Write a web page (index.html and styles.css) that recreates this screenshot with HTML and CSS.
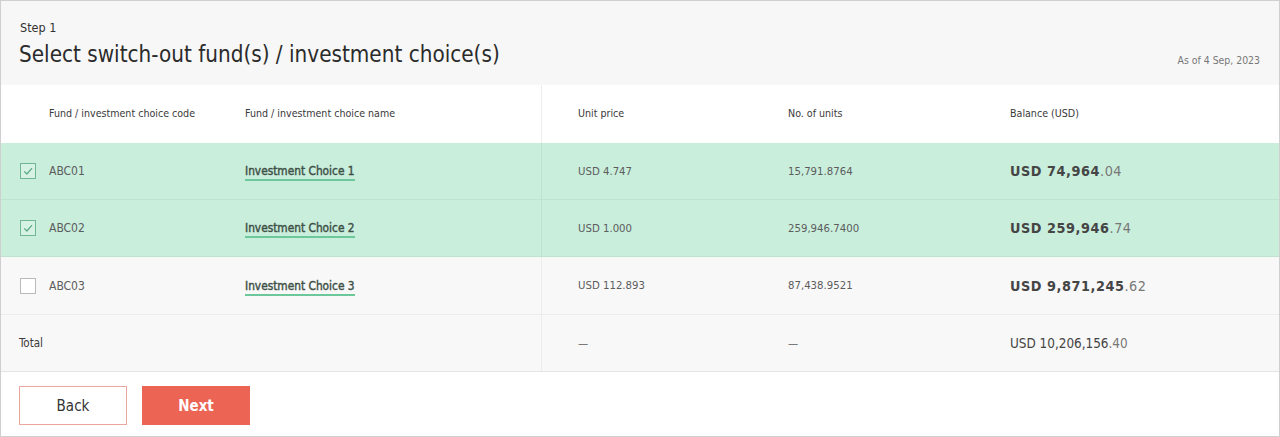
FILE: index.html
```html
<!DOCTYPE html>
<html lang="en">
<head>
<meta charset="utf-8">
<title>Select switch-out funds</title>
<link rel="stylesheet" href="styles.css">
</head>
<body>
<div class="page">
  <header class="head">
    <div class="head-left">
      <div class="step">Step 1</div>
      <h1 class="title">Select switch-out fund(s) / investment choice(s)</h1>
    </div>
    <div class="asof">As of 4 Sep, 2023</div>
  </header>

  <div class="table">
    <div class="row row-head">
      <div class="cell c-check"></div>
      <div class="cell c-code">Fund / investment choice code</div>
      <div class="cell c-name">Fund / investment choice name</div>
      <div class="cell c-price">Unit price</div>
      <div class="cell c-units">No. of units</div>
      <div class="cell c-bal">Balance (USD)</div>
    </div>

    <div class="row row-sel">
      <div class="cell c-check"><span class="box checked"><svg viewBox="0 0 16 16" width="16" height="16"><path d="M4.2 8.3 L6.9 11 L12 5.2" fill="none" stroke="#5aa883" stroke-width="1.2"/></svg></span></div>
      <div class="cell c-code">ABC01</div>
      <div class="cell c-name"><a class="link">Investment Choice 1</a></div>
      <div class="cell c-price">USD 4.747</div>
      <div class="cell c-units">15,791.8764</div>
      <div class="cell c-bal"><span class="amt">USD 74,964</span><span class="dec">.04</span></div>
    </div>

    <div class="row row-sel">
      <div class="cell c-check"><span class="box checked"><svg viewBox="0 0 16 16" width="16" height="16"><path d="M4.2 8.3 L6.9 11 L12 5.2" fill="none" stroke="#5aa883" stroke-width="1.2"/></svg></span></div>
      <div class="cell c-code">ABC02</div>
      <div class="cell c-name"><a class="link">Investment Choice 2</a></div>
      <div class="cell c-price">USD 1.000</div>
      <div class="cell c-units">259,946.7400</div>
      <div class="cell c-bal"><span class="amt">USD 259,946</span><span class="dec">.74</span></div>
    </div>

    <div class="row row-plain">
      <div class="cell c-check"><span class="box"></span></div>
      <div class="cell c-code">ABC03</div>
      <div class="cell c-name"><a class="link">Investment Choice 3</a></div>
      <div class="cell c-price">USD 112.893</div>
      <div class="cell c-units">87,438.9521</div>
      <div class="cell c-bal"><span class="amt">USD 9,871,245</span><span class="dec">.62</span></div>
    </div>

    <div class="row row-total">
      <div class="cell c-total">Total</div>
      <div class="cell c-price">—</div>
      <div class="cell c-units">—</div>
      <div class="cell c-bal c-bal-total"><span class="amt-t">USD 10,206,156</span><span class="dec">.40</span></div>
    </div>
  </div>

  <footer class="foot">
    <button class="btn btn-back">Back</button>
    <button class="btn btn-next">Next</button>
  </footer>
</div>
</body>
</html>
```

FILE: styles.css
```css
* { box-sizing: border-box; }
html, body { margin: 0; padding: 0; background: #fff; }
body {
  font-family: "DejaVu Sans Condensed", "Roboto", sans-serif;
  color: #333;
}
.page {
  width: 1280px;
  height: 437px;
  border: 1px solid #cfcfcf;
  display: flex;
  flex-direction: column;
  overflow: hidden;
}
.head {
  height: 84px;
  background: #f7f7f7;
  display: flex;
  justify-content: space-between;
  align-items: flex-end;
  padding: 0 19px 17px 18px;
}
.step {
  font-size: 12.5px;
  color: #333;
  margin-bottom: 5px;
  padding-left: 1px;
}
.title {
  margin: 0;
  font-size: 22.3px;
  font-weight: normal;
  color: #2b2b2b;
  line-height: 28px;
}
.asof {
  font-size: 10.4px;
  color: #777;
  padding-bottom: 2px;
}
.table { display: flex; flex-direction: column; }
.row {
  display: grid;
  grid-template-columns: 48px 196px 296px 247px 222px 1fr;
  align-items: stretch;
  border-bottom: 1px solid #ececec;
}
.row-head { height: 58px; background: #fff; border-bottom: none; }
.row-head .cell { padding-bottom: 2px; }
.row-sel { height: 57px; background: #c9eedc; border-bottom-color: #bfe3d1; }
.row-plain { height: 58px; background: #f8f8f8; }
.row-total {
  height: 57px;
  background: #f8f8f8;
  grid-template-columns: 540px 247px 222px 1fr;
  border-bottom: 1px solid #e4e4e4;
}
.cell {
  display: flex;
  align-items: center;
  font-size: 12px;
  color: #5c5c5c;
}
.row-head .cell { color: #3a3a3a; font-size: 10.6px; letter-spacing: 0; }
.c-check { padding-left: 19px; }
.c-price, .c-units { font-size: 11.3px; }
.c-price { padding-left: 36px; border-left: 1px solid #ececec; }
.row-sel .c-price { border-left-color: #bde2cf; }
.c-total { padding-left: 18px; color: #3a3a3a; font-size: 11.5px; }
.box {
  width: 16px;
  height: 16px;
  border: 1px solid #b9b9b9;
  background: #fff;
  display: inline-block;
  position: relative;
}
.box.checked {
  border-color: #6fb792;
  background: #d6f2e4;
}
.box svg { position: absolute; left: -1px; top: -1px; }
.link {
  font-weight: normal;
  -webkit-text-stroke: 0.4px #3e5046;
  color: #3e5046;
  text-decoration: none;
  border-bottom: 2px solid #6cc79a;
  padding-bottom: 1px;
  font-size: 11.8px;
  margin-top: 3px;
}
.c-bal { font-size: 14.3px; letter-spacing: 0.55px; }
.c-bal-total { font-size: 13.4px; letter-spacing: 0; }
.amt { font-weight: bold; color: #454545; }
.amt-t { color: #444; }
.dec { color: #777; font-weight: normal; }
.foot {
  flex: 1;
  display: flex;
  align-items: flex-start;
  gap: 15px;
  padding: 14px 0 0 18px;
  background: #fff;
}
.btn {
  width: 108px;
  height: 39px;
  font-family: inherit;
  font-size: 15px;
  border-radius: 0;
  cursor: pointer;
}
.btn-back {
  background: #fff;
  border: 1px solid #eaa79d;
  color: #333;
}
.btn-next {
  background: #ec6453;
  border: 1px solid #ec6453;
  color: #fff;
  font-weight: bold;
}
```
